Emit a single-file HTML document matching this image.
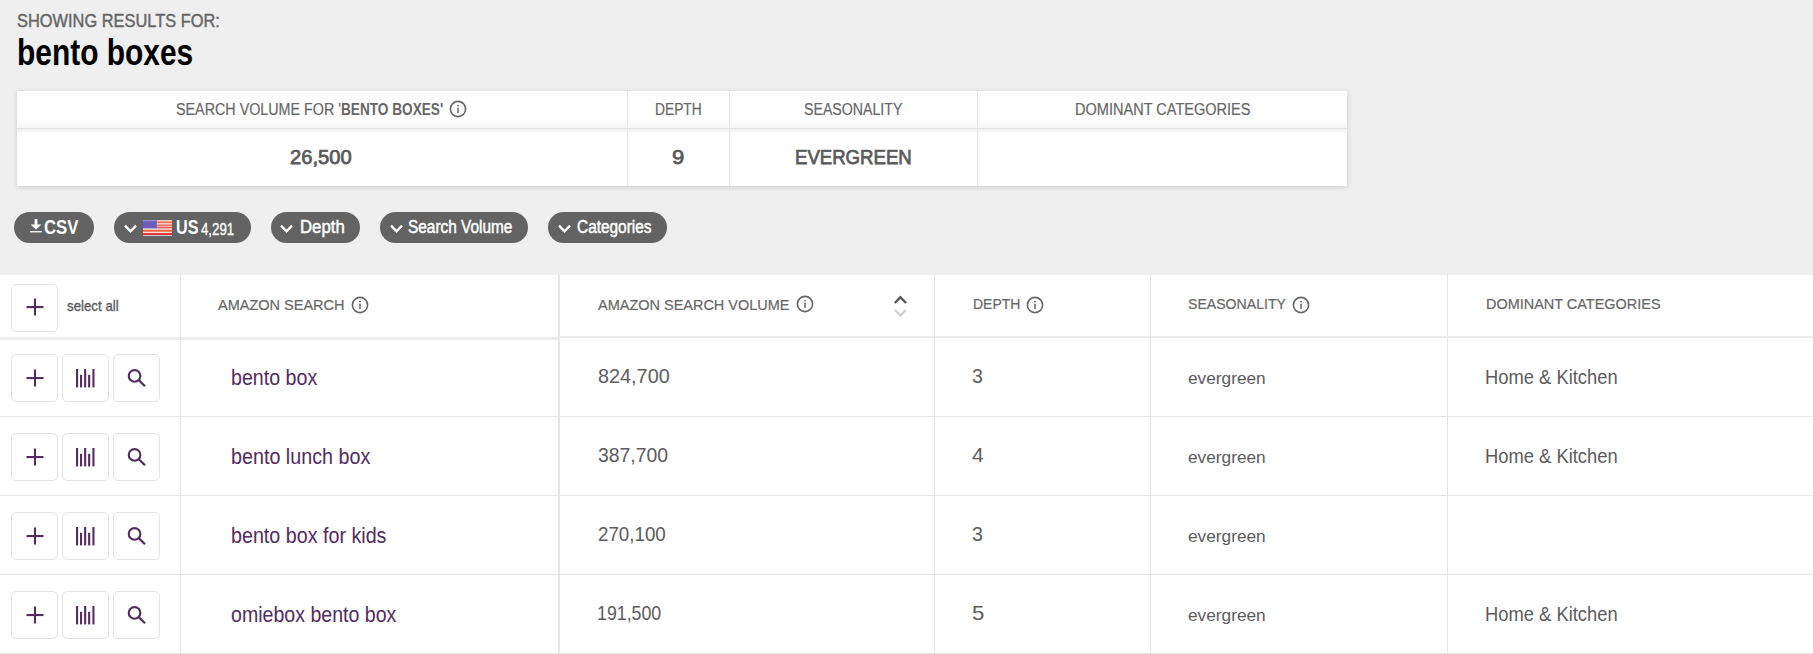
<!DOCTYPE html>
<html><head><meta charset="utf-8"><title>bento boxes</title>
<style>
html,body{margin:0;padding:0}
body{width:1813px;height:654px;overflow:hidden;position:relative;background:#efefef;font-family:"Liberation Sans", sans-serif}
.t{position:absolute;white-space:nowrap;line-height:1;transform-origin:0 0}
svg{display:block}
</style></head><body>
<div style="position:absolute;left:17px;top:91px;width:1330px;height:95px;background:#fff;box-shadow:0 1px 5px rgba(0,0,0,0.16)"></div>
<div style="position:absolute;left:17px;top:120px;width:1330px;height:8px;background:linear-gradient(to bottom,rgba(0,0,0,0),rgba(0,0,0,0.035))"></div>
<div style="position:absolute;left:17px;top:128px;width:1330px;height:1px;background:#e2e2e2"></div>
<div style="position:absolute;left:17px;top:129px;width:1330px;height:6px;background:linear-gradient(to bottom,rgba(0,0,0,0.06),rgba(0,0,0,0))"></div>
<div style="position:absolute;left:627px;top:91px;width:1px;height:95px;background:#e6e6e6"></div>
<div style="position:absolute;left:729px;top:91px;width:1px;height:95px;background:#e6e6e6"></div>
<div style="position:absolute;left:977px;top:91px;width:1px;height:95px;background:#e6e6e6"></div>
<svg style="position:absolute;left:448.0px;top:98.5px" width="20" height="20" viewBox="0 0 20 20"><circle cx="10" cy="10" r="7.60" fill="none" stroke="#666" stroke-width="1.6"/><line x1="10" y1="9.2" x2="10" y2="13.6" stroke="#666" stroke-width="1.5" stroke-linecap="round"/><circle cx="10" cy="6.6" r="0.95" fill="#666"/></svg>
<div style="position:absolute;left:14px;top:212px;width:80px;height:31px;background:#636363;border-radius:16px"></div>
<div style="position:absolute;left:114px;top:212px;width:137px;height:31px;background:#636363;border-radius:16px"></div>
<div style="position:absolute;left:271px;top:212px;width:89px;height:31px;background:#636363;border-radius:16px"></div>
<div style="position:absolute;left:380px;top:212px;width:148px;height:31px;background:#636363;border-radius:16px"></div>
<div style="position:absolute;left:548px;top:212px;width:119px;height:31px;background:#636363;border-radius:16px"></div>
<svg style="position:absolute;left:29px;top:218px" width="14" height="16" viewBox="0 0 14 16"><rect x="5.6" y="1" width="2.8" height="6" fill="#fff"/><polygon points="1.5,6.5 12.5,6.5 7,11.5" fill="#fff"/><rect x="1" y="13.1" width="11.8" height="1.3" fill="#fff"/></svg>
<svg style="position:absolute;left:122.7px;top:222.5px" width="16" height="12" viewBox="0 0 16 12"><polyline points="2,2.6 7.5,8.4 13,2.6" fill="none" stroke="#fff" stroke-width="2.3"/></svg>
<svg style="position:absolute;left:279.4px;top:222.5px" width="16" height="12" viewBox="0 0 16 12"><polyline points="2,2.6 7.5,8.4 13,2.6" fill="none" stroke="#fff" stroke-width="2.3"/></svg>
<svg style="position:absolute;left:389.0px;top:222.5px" width="16" height="12" viewBox="0 0 16 12"><polyline points="2,2.6 7.5,8.4 13,2.6" fill="none" stroke="#fff" stroke-width="2.3"/></svg>
<svg style="position:absolute;left:557.0px;top:222.5px" width="16" height="12" viewBox="0 0 16 12"><polyline points="2,2.6 7.5,8.4 13,2.6" fill="none" stroke="#fff" stroke-width="2.3"/></svg>
<svg style="position:absolute;left:143px;top:220px" width="29" height="16" viewBox="0 0 29 16"><rect width="29" height="16" fill="#fbe3dc"/><rect y="0" width="29" height="0.8" fill="#f7c8bb"/><rect y="1.4" width="29" height="1.8" fill="#f0704f"/><rect y="4.6" width="29" height="1.0" fill="#e8321c"/><rect y="6.6" width="29" height="1.8" fill="#f05c5c"/><rect y="9.8" width="29" height="1.9" fill="#f2623c"/><rect y="13.1" width="29" height="1.9" fill="#e03232"/><rect y="15.3" width="29" height="0.7" fill="#b9c2c0"/><rect x="0" y="0" width="13.8" height="8.8" fill="#6b5cc0"/><rect x="0" y="0" width="13.8" height="1.2" fill="#9b8ad6"/><rect x="0" y="8.0" width="13.8" height="0.8" fill="#c9c3e8"/></svg>
<div style="position:absolute;left:0px;top:275px;width:1813px;height:379px;background:#fff"></div>
<div style="position:absolute;left:0px;top:337px;width:558px;height:3px;background:#ececec"></div>
<div style="position:absolute;left:560px;top:336px;width:1253px;height:2px;background:#ececec"></div>
<div style="position:absolute;left:0px;top:416px;width:1813px;height:1px;background:#e6e6e6"></div>
<div style="position:absolute;left:0px;top:495px;width:1813px;height:1px;background:#e6e6e6"></div>
<div style="position:absolute;left:0px;top:574px;width:1813px;height:1px;background:#e6e6e6"></div>
<div style="position:absolute;left:0px;top:653px;width:1813px;height:1px;background:#e6e6e6"></div>
<div style="position:absolute;left:180px;top:275px;width:1px;height:379px;background:#e6e6e6"></div>
<div style="position:absolute;left:558px;top:275px;width:2px;height:379px;background:#e6e6e6"></div>
<div style="position:absolute;left:934px;top:275px;width:1px;height:379px;background:#e6e6e6"></div>
<div style="position:absolute;left:1150px;top:275px;width:1px;height:379px;background:#e6e6e6"></div>
<div style="position:absolute;left:1447px;top:275px;width:1px;height:379px;background:#e6e6e6"></div>
<div style="position:absolute;left:11px;top:284px;width:45px;height:46px;border:1px solid #e3e3e3;border-radius:5px;background:#fff"></div>
<svg style="position:absolute;left:25.5px;top:297.5px" width="18" height="18" viewBox="0 0 18 18"><rect x="0.5" y="8" width="17" height="2.1" fill="#532c60"/><rect x="7.95" y="0.5" width="2.1" height="17" fill="#532c60"/></svg>
<svg style="position:absolute;left:349.5px;top:295.0px" width="20" height="20" viewBox="0 0 20 20"><circle cx="10" cy="10" r="7.60" fill="none" stroke="#666" stroke-width="1.6"/><line x1="10" y1="9.2" x2="10" y2="13.6" stroke="#666" stroke-width="1.5" stroke-linecap="round"/><circle cx="10" cy="6.6" r="0.95" fill="#666"/></svg>
<svg style="position:absolute;left:794.5px;top:294.2px" width="20" height="20" viewBox="0 0 20 20"><circle cx="10" cy="10" r="7.60" fill="none" stroke="#666" stroke-width="1.6"/><line x1="10" y1="9.2" x2="10" y2="13.6" stroke="#666" stroke-width="1.5" stroke-linecap="round"/><circle cx="10" cy="6.6" r="0.95" fill="#666"/></svg>
<svg style="position:absolute;left:1025.2px;top:294.5px" width="20" height="20" viewBox="0 0 20 20"><circle cx="10" cy="10" r="7.60" fill="none" stroke="#666" stroke-width="1.6"/><line x1="10" y1="9.2" x2="10" y2="13.6" stroke="#666" stroke-width="1.5" stroke-linecap="round"/><circle cx="10" cy="6.6" r="0.95" fill="#666"/></svg>
<svg style="position:absolute;left:1290.6px;top:294.5px" width="20" height="20" viewBox="0 0 20 20"><circle cx="10" cy="10" r="7.60" fill="none" stroke="#666" stroke-width="1.6"/><line x1="10" y1="9.2" x2="10" y2="13.6" stroke="#666" stroke-width="1.5" stroke-linecap="round"/><circle cx="10" cy="6.6" r="0.95" fill="#666"/></svg>
<svg style="position:absolute;left:890px;top:290px" width="22" height="32" viewBox="0 0 22 32"><polyline points="4.8,13 10.4,7.2 16,13" fill="none" stroke="#555" stroke-width="2.4"/><polyline points="5,20 10.4,25.5 15.8,20" fill="none" stroke="#cfcfcf" stroke-width="2.4"/></svg>
<div style="position:absolute;left:11px;top:354px;width:45px;height:46px;border:1px solid #e3e3e3;border-radius:5px;background:#fff"></div>
<div style="position:absolute;left:62px;top:354px;width:45px;height:46px;border:1px solid #e3e3e3;border-radius:5px;background:#fff"></div>
<div style="position:absolute;left:113px;top:354px;width:45px;height:46px;border:1px solid #e3e3e3;border-radius:5px;background:#fff"></div>
<svg style="position:absolute;left:25.5px;top:368.5px" width="18" height="18" viewBox="0 0 18 18"><rect x="0.5" y="8" width="17" height="2.1" fill="#532c60"/><rect x="7.95" y="0.5" width="2.1" height="17" fill="#532c60"/></svg>
<svg style="position:absolute;left:70px;top:364px" width="32" height="30" viewBox="0 0 32 30"><rect x="6.00" y="5.00" width="2.1" height="18.40" fill="#532c60"/><rect x="10.00" y="10.80" width="2.1" height="12.60" fill="#532c60"/><rect x="14.10" y="5.00" width="2.1" height="18.40" fill="#532c60"/><rect x="18.10" y="10.80" width="2.1" height="12.60" fill="#532c60"/><rect x="22.40" y="5.00" width="2.1" height="18.40" fill="#532c60"/></svg>
<svg style="position:absolute;left:120px;top:364px" width="32" height="30" viewBox="0 0 32 30"><circle cx="14.55" cy="11.9" r="5.8" fill="none" stroke="#532c60" stroke-width="2.1"/><line x1="18.6" y1="16" x2="25" y2="22.3" stroke="#532c60" stroke-width="2.3"/></svg>
<div style="position:absolute;left:11px;top:433px;width:45px;height:46px;border:1px solid #e3e3e3;border-radius:5px;background:#fff"></div>
<div style="position:absolute;left:62px;top:433px;width:45px;height:46px;border:1px solid #e3e3e3;border-radius:5px;background:#fff"></div>
<div style="position:absolute;left:113px;top:433px;width:45px;height:46px;border:1px solid #e3e3e3;border-radius:5px;background:#fff"></div>
<svg style="position:absolute;left:25.5px;top:447.5px" width="18" height="18" viewBox="0 0 18 18"><rect x="0.5" y="8" width="17" height="2.1" fill="#532c60"/><rect x="7.95" y="0.5" width="2.1" height="17" fill="#532c60"/></svg>
<svg style="position:absolute;left:70px;top:443px" width="32" height="30" viewBox="0 0 32 30"><rect x="6.00" y="5.00" width="2.1" height="18.40" fill="#532c60"/><rect x="10.00" y="10.80" width="2.1" height="12.60" fill="#532c60"/><rect x="14.10" y="5.00" width="2.1" height="18.40" fill="#532c60"/><rect x="18.10" y="10.80" width="2.1" height="12.60" fill="#532c60"/><rect x="22.40" y="5.00" width="2.1" height="18.40" fill="#532c60"/></svg>
<svg style="position:absolute;left:120px;top:443px" width="32" height="30" viewBox="0 0 32 30"><circle cx="14.55" cy="11.9" r="5.8" fill="none" stroke="#532c60" stroke-width="2.1"/><line x1="18.6" y1="16" x2="25" y2="22.3" stroke="#532c60" stroke-width="2.3"/></svg>
<div style="position:absolute;left:11px;top:512px;width:45px;height:46px;border:1px solid #e3e3e3;border-radius:5px;background:#fff"></div>
<div style="position:absolute;left:62px;top:512px;width:45px;height:46px;border:1px solid #e3e3e3;border-radius:5px;background:#fff"></div>
<div style="position:absolute;left:113px;top:512px;width:45px;height:46px;border:1px solid #e3e3e3;border-radius:5px;background:#fff"></div>
<svg style="position:absolute;left:25.5px;top:526.5px" width="18" height="18" viewBox="0 0 18 18"><rect x="0.5" y="8" width="17" height="2.1" fill="#532c60"/><rect x="7.95" y="0.5" width="2.1" height="17" fill="#532c60"/></svg>
<svg style="position:absolute;left:70px;top:522px" width="32" height="30" viewBox="0 0 32 30"><rect x="6.00" y="5.00" width="2.1" height="18.40" fill="#532c60"/><rect x="10.00" y="10.80" width="2.1" height="12.60" fill="#532c60"/><rect x="14.10" y="5.00" width="2.1" height="18.40" fill="#532c60"/><rect x="18.10" y="10.80" width="2.1" height="12.60" fill="#532c60"/><rect x="22.40" y="5.00" width="2.1" height="18.40" fill="#532c60"/></svg>
<svg style="position:absolute;left:120px;top:522px" width="32" height="30" viewBox="0 0 32 30"><circle cx="14.55" cy="11.9" r="5.8" fill="none" stroke="#532c60" stroke-width="2.1"/><line x1="18.6" y1="16" x2="25" y2="22.3" stroke="#532c60" stroke-width="2.3"/></svg>
<div style="position:absolute;left:11px;top:591px;width:45px;height:46px;border:1px solid #e3e3e3;border-radius:5px;background:#fff"></div>
<div style="position:absolute;left:62px;top:591px;width:45px;height:46px;border:1px solid #e3e3e3;border-radius:5px;background:#fff"></div>
<div style="position:absolute;left:113px;top:591px;width:45px;height:46px;border:1px solid #e3e3e3;border-radius:5px;background:#fff"></div>
<svg style="position:absolute;left:25.5px;top:605.5px" width="18" height="18" viewBox="0 0 18 18"><rect x="0.5" y="8" width="17" height="2.1" fill="#532c60"/><rect x="7.95" y="0.5" width="2.1" height="17" fill="#532c60"/></svg>
<svg style="position:absolute;left:70px;top:601px" width="32" height="30" viewBox="0 0 32 30"><rect x="6.00" y="5.00" width="2.1" height="18.40" fill="#532c60"/><rect x="10.00" y="10.80" width="2.1" height="12.60" fill="#532c60"/><rect x="14.10" y="5.00" width="2.1" height="18.40" fill="#532c60"/><rect x="18.10" y="10.80" width="2.1" height="12.60" fill="#532c60"/><rect x="22.40" y="5.00" width="2.1" height="18.40" fill="#532c60"/></svg>
<svg style="position:absolute;left:120px;top:601px" width="32" height="30" viewBox="0 0 32 30"><circle cx="14.55" cy="11.9" r="5.8" fill="none" stroke="#532c60" stroke-width="2.1"/><line x1="18.6" y1="16" x2="25" y2="22.3" stroke="#532c60" stroke-width="2.3"/></svg>
<span class="t" style="left:16.63px;top:12.10px;font-size:18.90px;font-weight:400;color:#666666;transform:scaleX(0.8680);-webkit-text-stroke:0.45px #666666">SHOWING RESULTS FOR:</span>
<span class="t" style="left:17.07px;top:34.50px;font-size:36.85px;font-weight:700;color:#000000;transform:scaleX(0.8126)">bento boxes</span>
<span class="t" style="left:176.29px;top:102.00px;font-size:15.80px;font-weight:400;color:#666666;transform:scaleX(0.9061);-webkit-text-stroke:0.20px #666666">SEARCH VOLUME FOR '</span>
<span class="t" style="left:340.94px;top:102.00px;font-size:15.80px;font-weight:700;color:#666666;transform:scaleX(0.8624)">BENTO BOXES'</span>
<span class="t" style="left:654.73px;top:102.10px;font-size:15.80px;font-weight:400;color:#666666;transform:scaleX(0.8731);-webkit-text-stroke:0.20px #666666">DEPTH</span>
<span class="t" style="left:804.10px;top:102.00px;font-size:15.80px;font-weight:400;color:#666666;transform:scaleX(0.8963);-webkit-text-stroke:0.20px #666666">SEASONALITY</span>
<span class="t" style="left:1074.68px;top:102.10px;font-size:15.80px;font-weight:400;color:#666666;transform:scaleX(0.9201);-webkit-text-stroke:0.20px #666666">DOMINANT CATEGORIES</span>
<span class="t" style="left:290.19px;top:147.20px;font-size:20.00px;font-weight:400;color:#5a5a5a;transform:scaleX(1.0083);-webkit-text-stroke:0.75px #5a5a5a">26,500</span>
<span class="t" style="left:672.00px;top:146.90px;font-size:20.00px;font-weight:400;color:#5a5a5a;transform:scaleX(1.1000);-webkit-text-stroke:0.75px #5a5a5a">9</span>
<span class="t" style="left:794.64px;top:147.10px;font-size:20.00px;font-weight:400;color:#5a5a5a;transform:scaleX(0.9295);-webkit-text-stroke:0.75px #5a5a5a">EVERGREEN</span>
<span class="t" style="left:44.03px;top:218.00px;font-size:19.30px;font-weight:700;color:#ffffff;transform:scaleX(0.8692)">CSV</span>
<span class="t" style="left:175.66px;top:218.00px;font-size:19.30px;font-weight:700;color:#ffffff;transform:scaleX(0.8400)">US</span>
<span class="t" style="left:201.20px;top:221.50px;font-size:15.62px;font-weight:400;color:#ffffff;transform:scaleX(0.8487);-webkit-text-stroke:0.30px #ffffff">4,291</span>
<span class="t" style="left:299.77px;top:218.20px;font-size:18.00px;font-weight:400;color:#ffffff;transform:scaleX(0.9304);-webkit-text-stroke:0.50px #ffffff">Depth</span>
<span class="t" style="left:408.17px;top:218.20px;font-size:18.50px;font-weight:400;color:#ffffff;transform:scaleX(0.8323);-webkit-text-stroke:0.50px #ffffff">Search Volume</span>
<span class="t" style="left:576.67px;top:218.20px;font-size:18.50px;font-weight:400;color:#ffffff;transform:scaleX(0.8330);-webkit-text-stroke:0.50px #ffffff">Categories</span>
<span class="t" style="left:67.12px;top:298.30px;font-size:15.18px;font-weight:400;color:#5c5c5c;transform:scaleX(0.8754);-webkit-text-stroke:0.35px #5c5c5c">select all</span>
<span class="t" style="left:218.40px;top:297.40px;font-size:15.20px;font-weight:400;color:#666666;transform:scaleX(0.9550);-webkit-text-stroke:0.20px #666666">AMAZON SEARCH</span>
<span class="t" style="left:597.90px;top:296.90px;font-size:15.20px;font-weight:400;color:#666666;transform:scaleX(0.9535);-webkit-text-stroke:0.20px #666666">AMAZON SEARCH VOLUME</span>
<span class="t" style="left:972.88px;top:296.10px;font-size:15.20px;font-weight:400;color:#666666;transform:scaleX(0.9204);-webkit-text-stroke:0.20px #666666">DEPTH</span>
<span class="t" style="left:1187.97px;top:296.30px;font-size:15.20px;font-weight:400;color:#666666;transform:scaleX(0.9279);-webkit-text-stroke:0.20px #666666">SEASONALITY</span>
<span class="t" style="left:1485.65px;top:296.40px;font-size:15.20px;font-weight:400;color:#666666;transform:scaleX(0.9516);-webkit-text-stroke:0.20px #666666">DOMINANT CATEGORIES</span>
<span class="t" style="left:230.77px;top:367.10px;font-size:21.20px;font-weight:400;color:#532c60;transform:scaleX(0.9272)">bento box</span>
<span class="t" style="left:597.60px;top:367.10px;font-size:19.80px;font-weight:400;color:#5c5c5c;transform:scaleX(1.0029)">824,700</span>
<span class="t" style="left:972.11px;top:367.10px;font-size:19.80px;font-weight:400;color:#5c5c5c;transform:scaleX(0.9889)">3</span>
<span class="t" style="left:1187.89px;top:369.60px;font-size:17.00px;font-weight:400;color:#5c5c5c;transform:scaleX(1.0147)">evergreen</span>
<span class="t" style="left:1485.03px;top:367.90px;font-size:19.60px;font-weight:400;color:#5c5c5c;transform:scaleX(0.9367)">Home &amp; Kitchen</span>
<span class="t" style="left:230.77px;top:446.10px;font-size:21.20px;font-weight:400;color:#532c60;transform:scaleX(0.9311)">bento lunch box</span>
<span class="t" style="left:597.62px;top:446.10px;font-size:19.80px;font-weight:400;color:#5c5c5c;transform:scaleX(0.9800)">387,700</span>
<span class="t" style="left:972.20px;top:446.10px;font-size:19.80px;font-weight:400;color:#5c5c5c;transform:scaleX(1.0636)">4</span>
<span class="t" style="left:1187.89px;top:448.60px;font-size:17.00px;font-weight:400;color:#5c5c5c;transform:scaleX(1.0147)">evergreen</span>
<span class="t" style="left:1485.03px;top:446.90px;font-size:19.60px;font-weight:400;color:#5c5c5c;transform:scaleX(0.9367)">Home &amp; Kitchen</span>
<span class="t" style="left:230.77px;top:525.10px;font-size:21.20px;font-weight:400;color:#532c60;transform:scaleX(0.9295)">bento box for kids</span>
<span class="t" style="left:597.65px;top:525.10px;font-size:19.80px;font-weight:400;color:#5c5c5c;transform:scaleX(0.9471)">270,100</span>
<span class="t" style="left:972.11px;top:525.10px;font-size:19.80px;font-weight:400;color:#5c5c5c;transform:scaleX(0.9889)">3</span>
<span class="t" style="left:1187.89px;top:527.60px;font-size:17.00px;font-weight:400;color:#5c5c5c;transform:scaleX(1.0147)">evergreen</span>
<span class="t" style="left:230.78px;top:604.10px;font-size:21.20px;font-weight:400;color:#532c60;transform:scaleX(0.9236)">omiebox bento box</span>
<span class="t" style="left:596.90px;top:604.10px;font-size:19.80px;font-weight:400;color:#5c5c5c;transform:scaleX(0.8986)">191,500</span>
<span class="t" style="left:971.68px;top:604.10px;font-size:19.80px;font-weight:400;color:#5c5c5c;transform:scaleX(1.1222)">5</span>
<span class="t" style="left:1187.89px;top:606.60px;font-size:17.00px;font-weight:400;color:#5c5c5c;transform:scaleX(1.0147)">evergreen</span>
<span class="t" style="left:1485.03px;top:604.90px;font-size:19.60px;font-weight:400;color:#5c5c5c;transform:scaleX(0.9367)">Home &amp; Kitchen</span>
</body></html>
